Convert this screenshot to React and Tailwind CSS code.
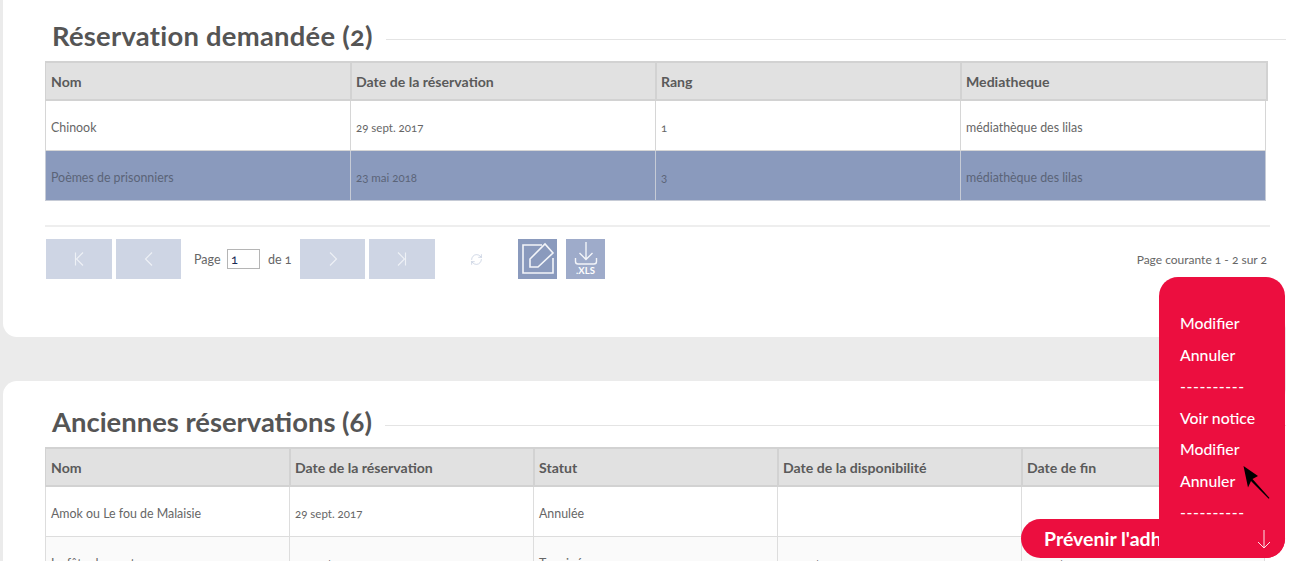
import React from "react";
import { RefreshCw } from "lucide-react";

const bodyOne = "grid grid-cols-[304px_305px_305px_305px]";
const headOne = "grid grid-cols-[304px_305px_305px_306px]";
const bodyTwo = "grid grid-cols-[243px_244px_244px_244px_243px]";
const headTwo = "grid grid-cols-[243px_244px_244px_244px_244px]";

function Cell({ children, cls = "" }) {
  return <div className={`flex items-center overflow-hidden whitespace-nowrap ${cls}`}>{children}</div>;
}

function Head({ cols, grid }) {
  return (
    <div className={`${grid} h-[40px] w-fit bg-[#e1e1e1] border-y-2 border-l border-r-2 border-[#d2d2d2] box-border`}>
      {cols.map((c, i) => (
        <Cell key={c} cls={`text-[14.1px] font-bold text-[#5a5a5a] pt-[2px] ${i ? "pl-[4px] border-l-2 border-[#d2d2d2]" : "pl-[5px]"}`}>{c}</Cell>
      ))}
    </div>
  );
}

function Row({ cells, grid, cls = "", line = "border-[#d6d6d6]", text = "text-[#666666]" }) {
  return (
    <div className={`${grid} h-[50px] w-fit border-l border-r border-b ${line} ${cls} box-border`}>
      {cells.map((c, i) => (
        <Cell key={i} cls={`pl-[5px] ${/\d/.test(c) ? "pt-[4px] text-[11.5px]" : "pt-[5px] text-[12.4px]"} ${text} ${i ? `border-l ${line}` : ""}`}>{c}</Cell>
      ))}
    </div>
  );
}

function Title({ children, cls, track }) {
  return (
    <div className={`flex items-center h-[34px] ${cls}`}>
      <h2 className={`ml-[7px] text-[27.4px] leading-[34px] font-bold text-[#555555] whitespace-nowrap -mt-[3px] ${track}`}>{children}</h2>
      <div className="flex-1 h-px bg-[#e4e4e4] ml-[13px] mt-[4px]" />
    </div>
  );
}

function PageBtn({ w, d }) {
  return (
    <button className={`${w} h-[40px] bg-[#ced5e4] flex items-center justify-center`}>
      <svg width="14" height="16" viewBox="0 0 14 16" fill="none" stroke="#eef1f6" strokeWidth="1.1">{d}</svg>
    </button>
  );
}

export default function App() {
  return (
    <div className="relative h-[573px] w-[1302px] overflow-hidden bg-white [font-family:Lato,'Liberation_Sans',sans-serif] oldstyle-nums">
      <div className="w-[1286px] h-[561px] overflow-hidden bg-[#ebebeb] pl-[3px]">
        <section className="h-[337px] bg-white rounded-b-[14px] pl-[42px] pt-[20px]">
          <Title cls="mb-[7px]" track="tracking-[0.25px]">Réservation demandée (2)</Title>
          <Head grid={headOne} cols={["Nom", "Date de la réservation", "Rang", "Mediatheque"]} />
          <Row grid={bodyOne} cells={["Chinook", "29 sept. 2017", "1", "médiathèque des lilas"]} />
          <Row grid={bodyOne} cls="bg-[#8a9abd]" line="border-[#c6cbd6]" text="text-[#5b6478]" cells={["Poèmes de prisonniers", "23 mai 2018", "3", "médiathèque des lilas"]} />
          <div className="h-[2px] w-[1225px] bg-[#eeeeee] mt-[24px]" />
          <div className="flex items-center mt-[12px] w-[1222px] pl-px text-[12.5px] text-[#666666]">
            <PageBtn w="w-[66px]" d={<path d="M3.5 1.5v13M11 1.5 4.5 8l6.5 6.5" />} />
            <div className="w-[4px]" />
            <PageBtn w="w-[65px]" d={<path d="M10 1.5 3.5 8l6.5 6.5" />} />
            <span className="ml-[13px] w-[28px] pt-[2px]">Page</span>
            <input readOnly value="1" className="ml-[5px] w-[33px] h-[20px] border border-[#b5b5b5] pl-[3px] text-[13px] text-[#1a2a55] bg-white" />
            <span className="ml-[8px] w-[22px] whitespace-nowrap pt-[2px]">de 1</span>
            <div className="w-[10px]" />
            <PageBtn w="w-[65px]" d={<path d="M4 1.5 10.5 8 4 14.5" />} />
            <div className="w-[4px]" />
            <PageBtn w="w-[66px]" d={<path d="M3 1.5 9.5 8 3 14.5M10.5 1.5v13" />} />
            <RefreshCw className="ml-[35px]" size={13} strokeWidth={1} color="#aebad3" />
            <button className="ml-[35px] w-[39px] h-[40px] bg-[#8a9abd] flex items-center justify-center">
              <svg width="39" height="40" viewBox="0 0 39 40" fill="none" stroke="#f3f5f9" strokeWidth="1.6">
                <path d="M24 6H5v28h30V19" />
                <path d="M12 28v-8L27 5l8 9-15 14z" />
              </svg>
            </button>
            <button className="ml-[9px] w-[39px] h-[40px] bg-[#9eabca] flex flex-col items-center justify-start pt-[2px] text-white">
              <svg width="24" height="25" viewBox="0 0 24 25" fill="none" stroke="#f3f5f9" strokeWidth="1.4">
                <path d="M12 1v17M5.5 12l6.5 6.5 6.5-6.5M1.5 17v3.5c0 1.5.8 2.5 2.5 2.5h16c1.7 0 2.5-1 2.5-2.5V17" />
              </svg>
              <span className="text-[9.5px] leading-[10px] font-bold lining-nums">.XLS</span>
            </button>
            <span className="ml-auto text-[12px] pt-[1px]">Page courante 1 - 2 sur 2</span>
          </div>
        </section>
        <section className="h-[300px] mt-[44px] bg-white rounded-t-[14px] pl-[42px] pt-[25px]">
          <Title cls="mb-[7px]" track="tracking-normal">Anciennes réservations (6)</Title>
          <Head grid={headTwo} cols={["Nom", "Date de la réservation", "Statut", "Date de la disponibilité", "Date de fin"]} />
          <Row grid={bodyTwo} line="border-[#dddddd]" cells={["Amok ou Le fou de Malaisie", "29 sept. 2017", "Annulée", "", ""]} />
          <Row grid={bodyTwo} cls="bg-[#fafafa]" line="border-[#dddddd]" cells={["La fête des mots", "29 sept. 2017", "Terminée", "29 sept. 2017", "29 sept. 2017"]} />
        </section>
      </div>

      <div className="absolute left-[1021px] top-[519px] w-[264px] h-[39px] rounded-[20px] bg-[#ec0e3f] pl-[23px] flex items-center text-white text-[19.5px] font-bold overflow-hidden whitespace-nowrap">
        Prévenir l'adhérent
      </div>
      <div className="absolute left-[1159px] top-[277px] w-[126px] h-[281px] rounded-t-[19px] rounded-br-[19px] bg-[#ec0e3f] pl-[21px] pt-[30px] text-white text-[15.8px] font-medium leading-[31.5px]">
        <div>Modifier</div>
        <div>Annuler</div>
        <div className="tracking-[0.6px]">----------</div>
        <div>Voir notice</div>
        <div>Modifier</div>
        <div>Annuler</div>
        <div className="tracking-[0.6px]">----------</div>
        <svg className="absolute right-[14px] bottom-[9px]" width="14" height="20" viewBox="0 0 14 20" fill="none" stroke="#fbe3e8" strokeWidth="1">
          <path d="M7 1v18M1 13l6 6 6-6" />
        </svg>
      </div>
      <svg className="absolute left-[1240px] top-[463px]" width="32" height="38" viewBox="0 0 32 38">
        <path d="M3.5 3 18 13l-5.5 3 17 19-.8.7L11 18l-3 6.5z" fill="#000" />
      </svg>
    </div>
  );
}
